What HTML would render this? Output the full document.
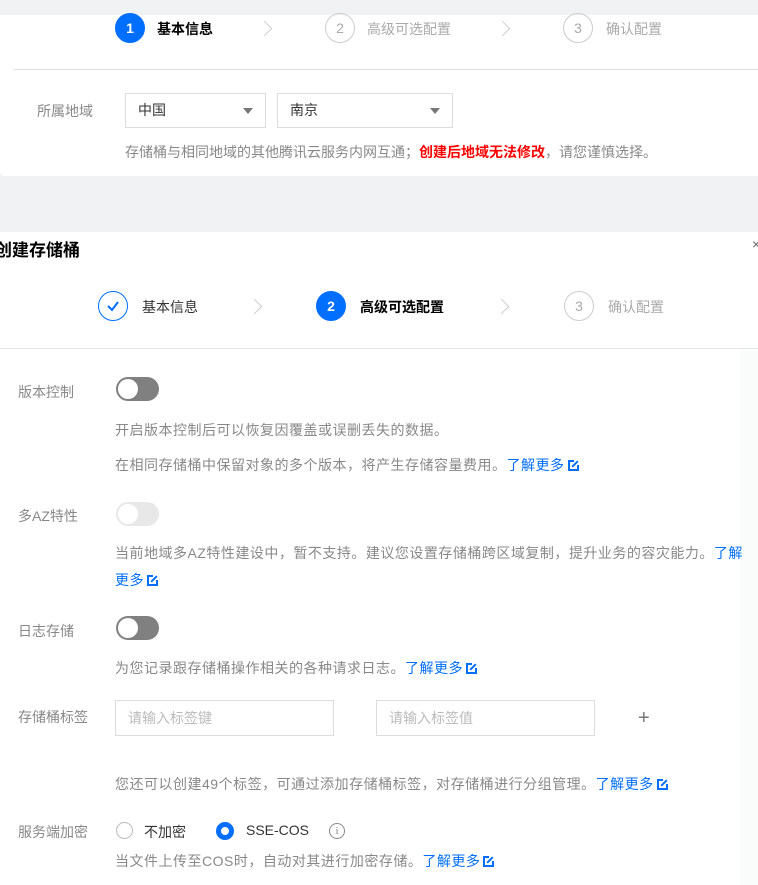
<!DOCTYPE html>
<html><head><meta charset="utf-8"><style>
*{margin:0;padding:0;box-sizing:border-box}
body{width:758px;height:885px;overflow:hidden;background:#f0f2f3;font-family:"Liberation Sans","Noto Sans CJK SC",sans-serif;position:relative;color:#333}
.a{position:absolute;white-space:nowrap}
.p{position:absolute;background:#fff}
.c{position:absolute;width:30px;height:30px;border-radius:50%;text-align:center;line-height:28px;font-size:14px}
.on{background:#006eff;color:#fff;border:1px solid #006eff;font-weight:bold}
.off{border:1px solid #ccc;color:#aaa}
.st{font-size:14px}
.chev{position:absolute;width:11px;height:11px;border-top:1px solid #ccc;border-right:1px solid #ccc;transform:rotate(45deg)}
.lbl{font-size:14px;color:#888}
.d{font-size:14px;color:#888}
.d2{letter-spacing:0.5px}
.lk{color:#006eff}
.ext{display:inline-block;width:11px;height:11px;border:2px solid #006eff;margin-left:3px;vertical-align:-1px;position:relative}
.ext:after{content:"";position:absolute;right:-3px;top:-3px;width:6px;height:6px;background:#fff}
.ext:before{content:"";position:absolute;right:-2px;top:1px;width:8px;height:2px;background:#006eff;transform:rotate(-45deg);z-index:1}
.tg{position:absolute;width:43px;height:24px;border-radius:12px;background:#808080}
.tg:after{content:"";position:absolute;left:2px;top:2px;width:20px;height:20px;border-radius:50%;background:#fff}
.sel{position:absolute;border:1px solid #ddd;height:35px;font-size:14px;line-height:33px;padding-left:12px;color:#333;background:#fff}
.sel:after{content:"";position:absolute;right:12px;top:14px;border:5px solid transparent;border-top:6px solid #777}
.in{position:absolute;border:1px solid #ddd;height:36px;font-size:14px;line-height:34px;padding-left:12px;color:#bbb}
</style></head><body>
<div class="p" style="left:0;top:15px;width:758px;height:161px;border-radius:0 0 0 4px"></div>
<div class="c on" style="left:115px;top:13px">1</div>
<div class="a st" style="left:157px;top:19px;font-weight:bold;color:#000">基本信息</div>
<div class="chev" style="left:259px;top:23px"></div>
<div class="c off" style="left:325px;top:13px">2</div>
<div class="a st" style="left:367px;top:19px;color:#aaa">高级可选配置</div>
<div class="chev" style="left:497px;top:23px"></div>
<div class="c off" style="left:563px;top:13px">3</div>
<div class="a st" style="left:606px;top:19px;color:#aaa">确认配置</div>
<div class="a" style="left:14px;top:69px;width:744px;height:1px;background:#ddd"></div>
<div class="a lbl" style="left:37px;top:101px">所属地域</div>
<div class="sel" style="left:125px;top:93px;width:141px">中国</div>
<div class="sel" style="left:277px;top:93px;width:176px">南京</div>
<div class="a d" style="left:125px;top:142px">存储桶与相同地域的其他腾讯云服务内网互通；<b style="color:#f00">创建后地域无法修改</b>，请您谨慎选择。</div>

<div class="p" style="left:0;top:232px;width:758px;height:653px"></div>
<div class="a" style="left:740px;top:350px;width:18px;height:535px;background:#fafbfb"></div>
<div class="a" style="left:-5px;top:236px;font-size:17px;font-weight:bold;color:#000">创建存储桶</div>
<div class="a" style="left:752px;top:236px;font-size:14px;color:#666">×</div>
<div class="c" style="left:98px;top:291px;border:1px solid #006eff"><svg width="14" height="12" viewBox="0 0 14 12" style="margin-top:8px"><path d="M2 6 L6 10 L12 2" fill="none" stroke="#006eff" stroke-width="2"/></svg></div>
<div class="a st" style="left:142px;top:297px;color:#333">基本信息</div>
<div class="chev" style="left:249px;top:301px"></div>
<div class="c on" style="left:316px;top:291px">2</div>
<div class="a st" style="left:360px;top:297px;font-weight:bold;color:#000">高级可选配置</div>
<div class="chev" style="left:496px;top:301px"></div>
<div class="c off" style="left:564px;top:291px">3</div>
<div class="a st" style="left:608px;top:297px;color:#aaa">确认配置</div>
<div class="a" style="left:0;top:348px;width:758px;height:1px;background:#e5e5e5"></div>

<div class="a lbl" style="left:18px;top:382px">版本控制</div>
<div class="tg" style="left:116px;top:377px"></div>
<div class="a d d2" style="left:115px;top:420px">开启版本控制后可以恢复因覆盖或误删丢失的数据。</div>
<div class="a d d2" style="left:115px;top:455px">在相同存储桶中保留对象的多个版本，将产生存储容量费用。<span class="lk">了解更多</span><span class="ext"></span></div>

<div class="a lbl" style="left:18px;top:506px">多AZ特性</div>
<div class="tg" style="left:116px;top:502px;background:#e8e8e8"></div>
<div class="a d d2" style="left:115px;top:543px">当前地域多AZ特性建设中，暂不支持。建议您设置存储桶跨区域复制，提升业务的容灾能力。<span class="lk">了解</span></div>
<div class="a d d2" style="left:115px;top:570px"><span class="lk">更多</span><span class="ext"></span></div>

<div class="a lbl" style="left:18px;top:621px">日志存储</div>
<div class="tg" style="left:116px;top:616px"></div>
<div class="a d d2" style="left:115px;top:658px">为您记录跟存储桶操作相关的各种请求日志。<span class="lk">了解更多</span><span class="ext"></span></div>

<div class="a lbl" style="left:18px;top:707px">存储桶标签</div>
<div class="in" style="left:115px;top:700px;width:219px">请输入标签键</div>
<div class="in" style="left:376px;top:700px;width:219px">请输入标签值</div>
<div class="a" style="left:638px;top:707px;font-size:20px;color:#777">+</div>
<div class="a d d2" style="left:115px;top:774px">您还可以创建49个标签，可通过添加存储桶标签，对存储桶进行分组管理。<span class="lk">了解更多</span><span class="ext"></span></div>

<div class="a lbl" style="left:18px;top:822px">服务端加密</div>
<div class="a" style="left:116px;top:822px;width:17px;height:17px;border:1px solid #bbb;border-radius:50%"></div>
<div class="a" style="left:144px;top:822px;font-size:14px;color:#333">不加密</div>
<div class="a" style="left:216px;top:822px;width:18px;height:18px;border:5px solid #006eff;border-radius:50%"></div>
<div class="a" style="left:246px;top:822px;font-size:14px;color:#333">SSE-COS</div>
<div class="a" style="left:329px;top:823px;width:16px;height:16px;border:1px solid #888;border-radius:50%;font-size:11px;line-height:14px;text-align:center;color:#888;font-family:'Liberation Serif',serif">i</div>
<div class="a d d2" style="left:115px;top:851px">当文件上传至COS时，自动对其进行加密存储。<span class="lk">了解更多</span><span class="ext"></span></div>
</body></html>
